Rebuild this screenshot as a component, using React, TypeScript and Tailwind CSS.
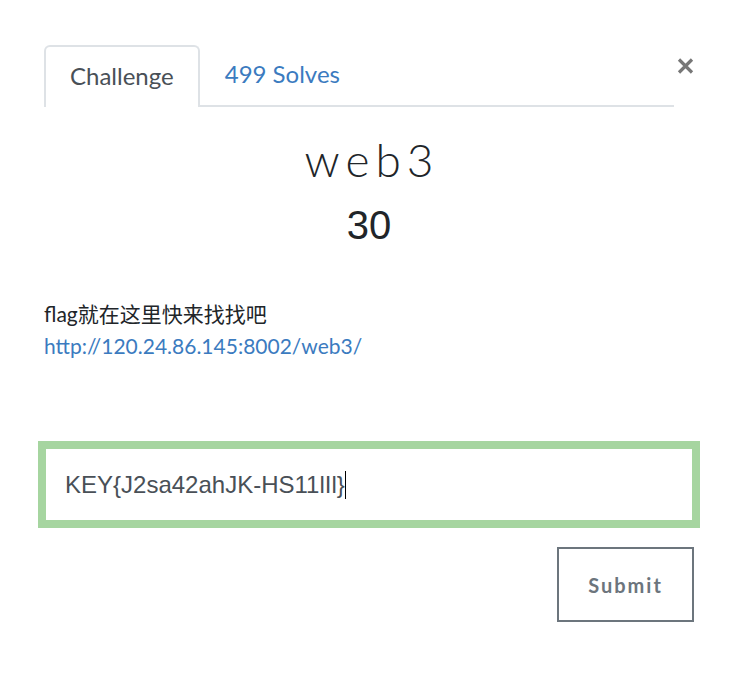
import React from "react";

export default function App() {
  return (
    <div className="w-[737px] h-[692px] bg-white" style={{ fontFamily: "Lato, 'Noto Sans CJK SC', sans-serif" }}>
      <div className="pt-[45px] pl-[44px] pr-[43px]">
        <div className="flex items-start">
          <div className="flex-1 flex border-b-2 border-[#dee2e6]">
            <div className="-mb-[2px] border-2 border-b-0 border-[#dee2e6] rounded-t-[6px] bg-white px-[24px] pt-[11px] pb-[13px] text-[24px] leading-[36px] text-[#495057]">
              Challenge
            </div>
            <div className="px-[25px] pt-[11px] pb-[13px] text-[24px] leading-[36px] text-[#3b7bbf]">499 Solves</div>
          </div>
          <div className="w-[20px] pt-[13px] flex justify-end">
            <svg width="17" height="16" viewBox="0 0 17 16">
              <path d="M2 1.5 L15 14.5 M15 1.5 L2 14.5" stroke="#777" strokeWidth="3.2" strokeLinecap="butt" />
            </svg>
          </div>
        </div>

        <div className="flex flex-col items-center mt-[27px]">
          <h2 className="text-[46px] leading-[52px] font-light tracking-[6px] pl-[6px] text-[#212529]">web3</h2>
          <h4
            className="mt-[17px] text-[40px] leading-[44px] text-[#212529]"
            style={{ fontFamily: "'Liberation Sans', Arial, sans-serif" }}
          >
            30
          </h4>
        </div>

        <div className="mt-[51px] text-[21px] leading-[31.5px] text-[#212529]">
          <p>flag就在这里快来找找吧</p>
          <p className="text-[#3b7bbf]">http://120.24.86.145:8002/web3/</p>
        </div>

        <div className="mt-[86px] h-[75px] border-2 border-[#a6d5a0] ring-[6px] ring-[#a6d5a0] bg-white flex items-center pl-[19px]">
          <span
            className="text-[24px] leading-[28px] text-[#495057]"
            style={{ fontFamily: "'Liberation Sans', Arial, sans-serif" }}
          >
            KEY{"{"}J2sa42ahJK-HS11lIl{"}"}
          </span>
          <span className="inline-block w-[1px] h-[28px] bg-black" />
        </div>

        <div className="flex justify-end mt-[25px]">
          <button className="w-[137px] h-[75px] border-2 border-[#6c757d] bg-white text-[20px] font-bold tracking-[2px] text-[#6c757d]">
            Submit
          </button>
        </div>
      </div>
    </div>
  );
}
